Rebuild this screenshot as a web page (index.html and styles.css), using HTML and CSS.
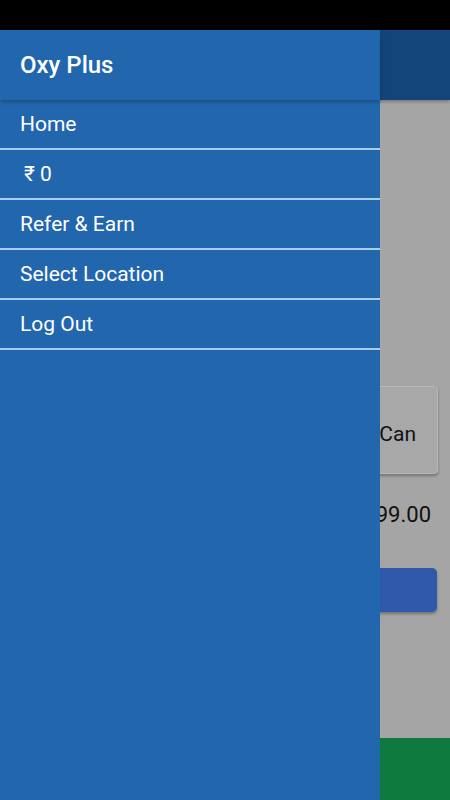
FILE: index.html
```html
<!DOCTYPE html>
<html lang="en">
<head>
    <meta charset="UTF-8">
    <meta name="viewport" content="width=device-width, initial-scale=1.0">
    <title>Oxy Plus</title>
    <link rel="stylesheet" href="styles.css">
</head>
<body>
    <div class="status-bar"></div>
    <div class="app">
        <!-- contenu derriere le menu (assombri) -->
        <div class="screen">
            <div class="toolbar"></div>
            <div class="content">
                <div class="product-card">
                    <span class="product-name">Water Can</span>
                </div>
                <div class="price">₹ 99.00</div>
                <button class="order-btn" type="button"></button>
            </div>
            <div class="bottom-bar"></div>
        </div>

        <nav class="drawer">
            <div class="drawer-header">Oxy Plus</div>
            <ul class="menu">
                <li>Home</li>
                <li class="wallet">₹ 0</li>
                <li>Refer &amp; Earn</li>
                <li>Select Location</li>
                <li>Log Out</li>
            </ul>
        </nav>
    </div>
</body>
</html>
```

FILE: styles.css
```css
body {
    margin: 0;
    font-family: Roboto, "Noto Sans", Arial, sans-serif;
    background: #000;
}
.status-bar {
    height: 30px;
    background: #000;
}
.app {
    position: relative;
    height: 770px;
    overflow: hidden;
}
.screen {
    height: 100%;
    display: flex;
    flex-direction: column;
    background: #a5a5a5;
}
.toolbar {
    height: 70px;
    background: #14457a;
    box-shadow: 0 2px 3px rgba(0, 0, 0, 0.25);
}
.content {
    flex: 1;
    display: flex;
    flex-direction: column;
    align-items: flex-end;
    padding: 286px 12px 0 0;
}
.product-card {
    width: 260px;
    height: 88px;
    border: 1px solid #b9b9b9;
    border-radius: 4px;
    background: #a8a8a8;
    box-shadow: 0 2px 3px rgba(0, 0, 0, 0.3);
    display: flex;
    align-items: center;
    justify-content: flex-end;
    padding: 8px 21px 0 0;
    box-sizing: border-box;
}
.product-name {
    font-size: 21px;
    color: #111;
}
.price {
    margin-top: 28px;
    padding-right: 7px;
    font-size: 22px;
    color: #111;
}
.order-btn {
    margin-top: 41px;
    width: 260px;
    height: 44px;
    border: none;
    border-radius: 5px;
    background: #2f5aab;
    box-shadow: 0 2px 3px rgba(0, 0, 0, 0.3);
    margin-right: 1px;
}
.bottom-bar {
    height: 62px;
    background: #0f7a3d;
}
.drawer {
    position: absolute;
    top: 0;
    left: 0;
    bottom: 0;
    width: 380px;
    background: #2267ae;
}
.drawer-header {
    height: 70px;
    display: flex;
    align-items: center;
    padding-left: 20px;
    font-size: 24px;
    font-weight: 500;
    color: #fff;
    box-shadow: 0 2px 4px rgba(0, 0, 0, 0.25);
    position: relative;
}
.menu {
    list-style: none;
    margin: 0;
    padding: 0;
}
.menu li {
    height: 48px;
    display: flex;
    align-items: center;
    padding-left: 20px;
    font-size: 21px;
    color: #fff;
    border-bottom: 2px solid #a9cdef;
}
.menu .wallet {
    padding-left: 24px;
}
```
